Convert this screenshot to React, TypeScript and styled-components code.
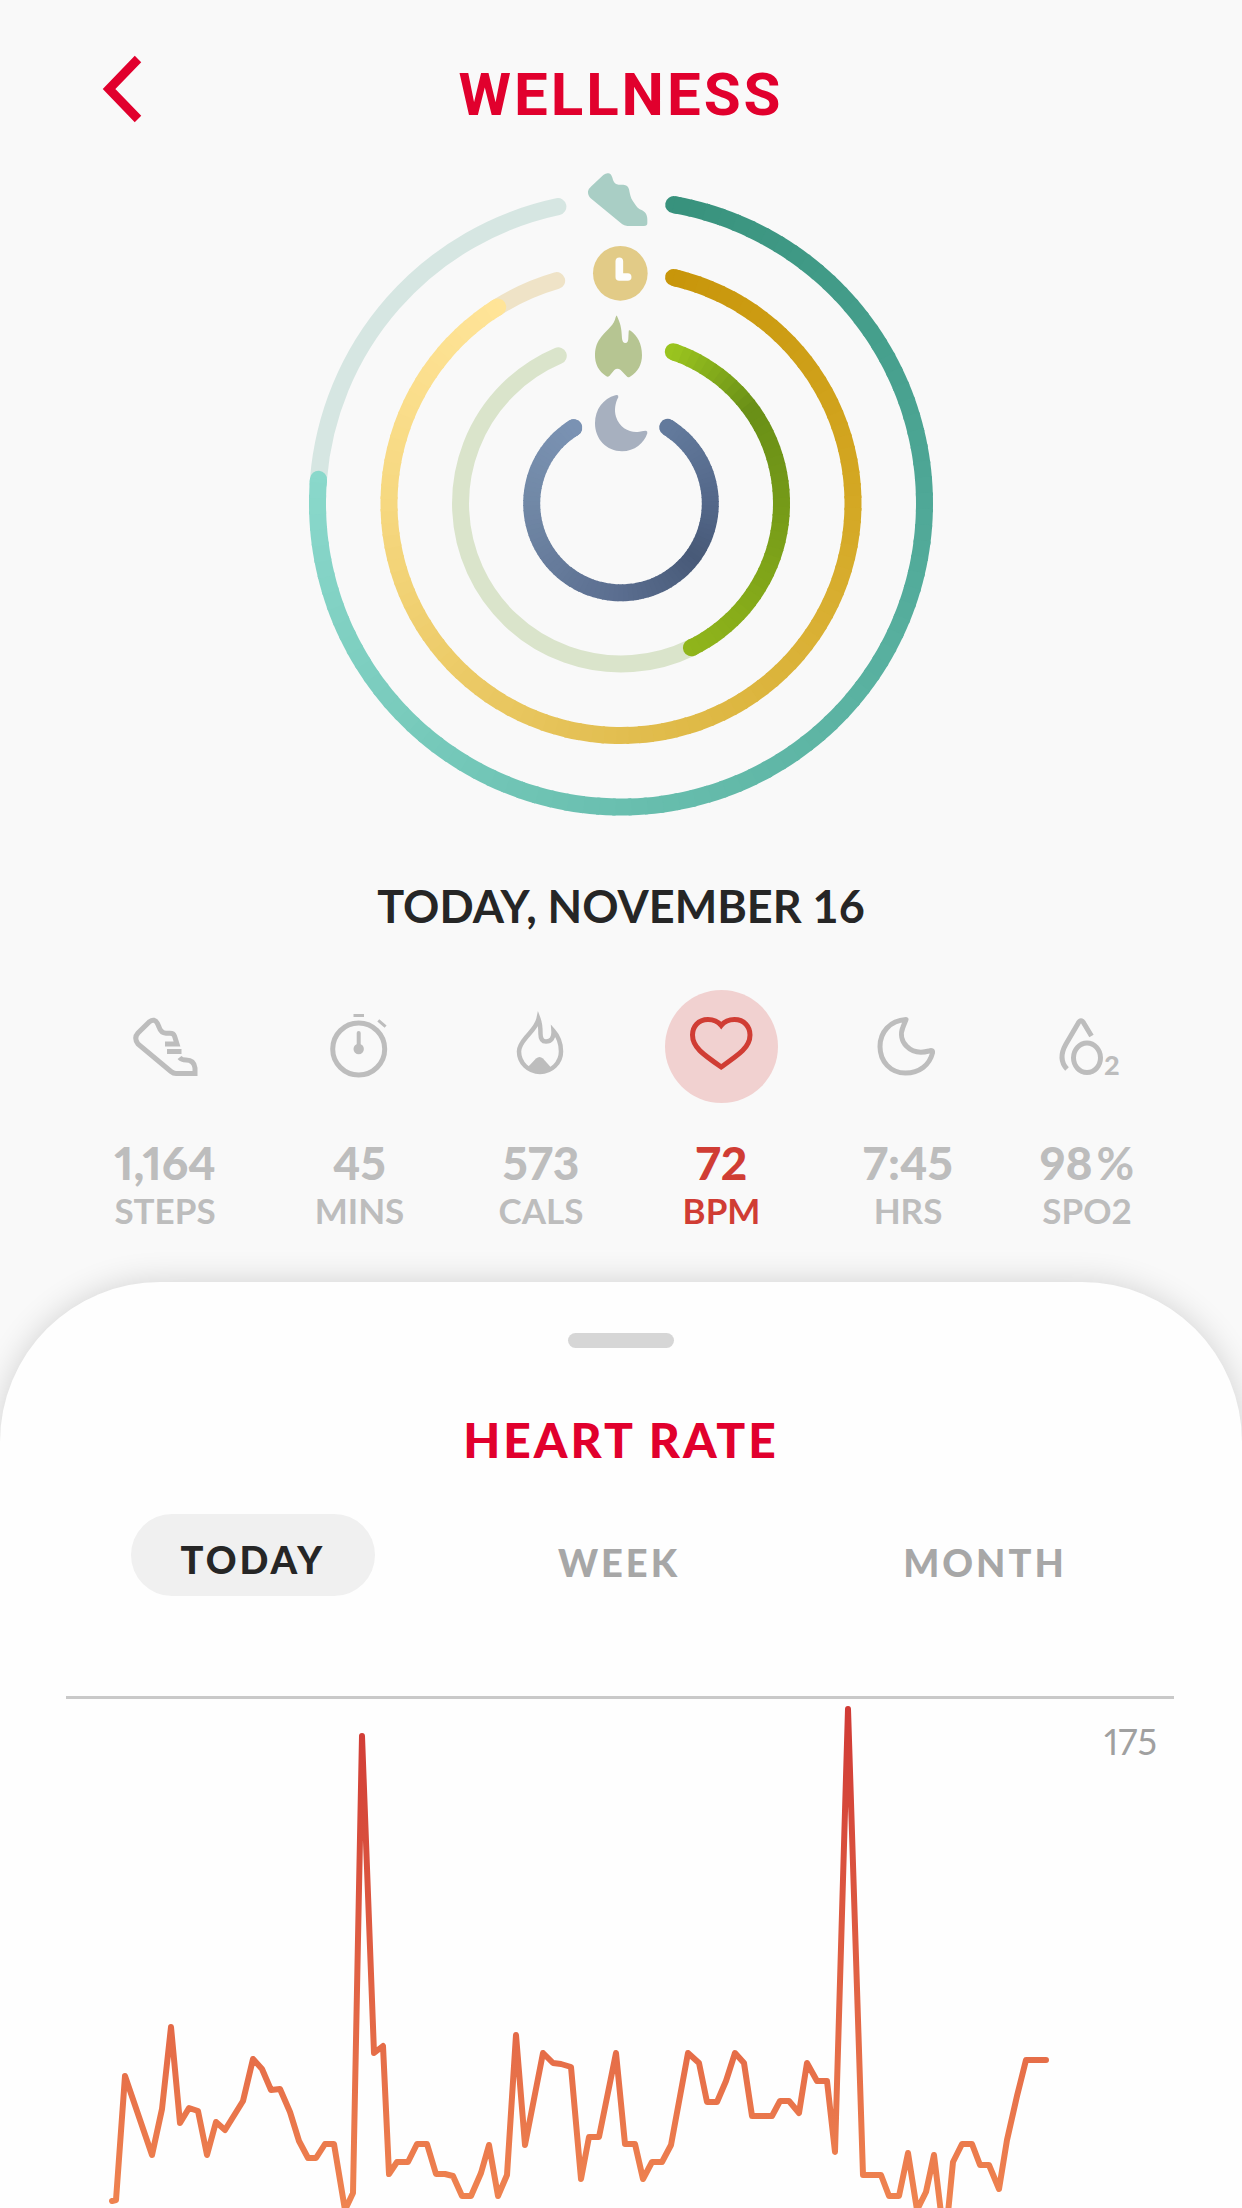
import React, { useState } from "react";
import styled, { createGlobalStyle } from "styled-components";

const RED = "#e1002d";
const ACTIVE = "#d03d34";
const MUTED = "#bdbdbd";

const GlobalStyle = createGlobalStyle`
  *, *::before, *::after { box-sizing: border-box; }
  body {
    margin: 0;
    background: #f9f9f9;
    font-family: Lato, "Open Sans", sans-serif;
    color: #262626;
  }
  h1, h2, p, figure, dl, dd { margin: 0; }
  button {
    font: inherit;
    color: inherit;
    background: none;
    border: 0;
    padding: 0;
    cursor: pointer;
  }
`;

const Page = styled.main`
  display: flex;
  flex-direction: column;
  overflow: hidden;
`;

const Header = styled.header`
  display: grid;
  grid-template-columns: 1fr auto 1fr;
  align-items: start;
  padding: 54px 100px 0;
`;

const BackButton = styled.button`
  justify-self: start;
  height: 70px;
  svg { display: block; }
`;

const Title = styled.h1`
  font: 700 60px/82px Roboto, sans-serif;
  letter-spacing: 3px;
  color: ${RED};
`;

const Rings = styled.svg`
  display: block;
  width: 642px;
  max-width: 100%;
  margin: 34px auto 0;
`;

const DateLine = styled.h2`
  margin-top: 58px;
  font-size: 45px;
  line-height: 56px;
  font-weight: 700;
  text-align: center;
`;

const Metrics = styled.nav`
  display: grid;
  grid-template-columns: 200fr 189fr 174fr 187fr 186fr 172fr;
  margin-top: 56px;
  padding: 0 69px 0 65px;
`;

const Metric = styled.button<{ $active: boolean }>`
  display: flex;
  flex-direction: column;
  align-items: center;
  color: ${(p) => (p.$active ? ACTIVE : MUTED)};
`;

const MetricIcon = styled.span<{ $active: boolean }>`
  display: grid;
  place-items: center;
  width: 113px;
  height: 113px;
  border-radius: 50%;
  background: ${(p) => (p.$active ? "#f1d1d0" : "transparent")};
`;

const MetricValue = styled.span`
  margin-top: 35px;
  font-size: 46px;
  line-height: 50px;
  font-weight: 900;
  font-variant-numeric: proportional-nums;
  white-space: nowrap;
`;

const Unit = styled.span`
  margin-left: 4px;
  font-weight: 700;
`;

const MetricLabel = styled.span`
  font-size: 35px;
  line-height: 44px;
  font-weight: 700;
`;

const Sheet = styled.section`
  display: flex;
  flex-direction: column;
  margin-top: 50px;
  padding-top: 51px;
  border-radius: 160px 160px 0 0;
  background: #fefefe;
  box-shadow: 0 0 32px rgba(0, 0, 0, 0.16);
`;

const Handle = styled.span`
  align-self: center;
  width: 106px;
  height: 15px;
  border-radius: 8px;
  background: #d6d6d6;
`;

const SheetTitle = styled.h2`
  margin-top: 62px;
  font-size: 48px;
  line-height: 60px;
  font-weight: 900;
  letter-spacing: 3px;
  text-align: center;
  color: ${RED};
`;

const Tabs = styled.div`
  display: grid;
  grid-template-columns: repeat(3, 1fr);
  justify-items: center;
  margin-top: 44px;
  padding: 0 74px 0 70px;
`;

const Tab = styled.button<{ $active: boolean }>`
  width: 244px;
  height: 82px;
  padding-top: ${(p) => (p.$active ? 8 : 14)}px;
  border-radius: 41px;
  font-size: 38px;
  line-height: 48px;
  font-weight: 900;
  letter-spacing: 3px;
  color: ${(p) => (p.$active ? "#262626" : "#a7a7a7")};
  background: ${(p) => (p.$active ? "#f0f0f0" : "transparent")};
`;

const Chart = styled.figure`
  display: grid;
  margin: 100px 68px 0 66px;
  border-top: 3px solid #c9c9c9;
  > * { grid-area: 1 / 1; }
`;

const ChartLine = styled.svg`
  display: block;
  width: 100%;
`;

const ChartMax = styled.figcaption`
  justify-self: end;
  align-self: start;
  padding: 20px 17px 0 0;
  font-size: 36px;
  line-height: 44px;
  color: #a0a0a0;
  font-variant-numeric: proportional-nums;
`;

/* ---------- activity rings ---------- */

type Stop = [number, string];

const CX = 621;
const CY = 503.5;
const RING_WIDTH = 17;

const point = (r: number, deg: number) => {
  const a = (deg * Math.PI) / 180;
  return `${(CX + r * Math.sin(a)).toFixed(2)} ${(CY - r * Math.cos(a)).toFixed(2)}`;
};

const arc = (r: number, from: number, to: number) =>
  `M${point(r, from)}A${r} ${r} 0 ${to - from > 180 ? 1 : 0} 1 ${point(r, to)}`;

const channels = (hex: string) =>
  [1, 3, 5].map((i) => parseInt(hex.slice(i, i + 2), 16));

const colorAt = (stops: Stop[], deg: number) => {
  let i = 0;
  while (i < stops.length - 2 && deg > stops[i + 1][0]) i++;
  const [d0, c0] = stops[i];
  const [d1, c1] = stops[i + 1];
  const t = Math.min(1, Math.max(0, (deg - d0) / (d1 - d0)));
  const a = channels(c0);
  const b = channels(c1);
  return `rgb(${a.map((v, k) => Math.round(v + (b[k] - v) * t)).join(",")})`;
};

const STEP = 3;

function Ring({ r, trackEnd, track, stops }: { r: number; trackEnd: number; track: string; stops: Stop[] }) {
  const start = stops[0][0];
  const end = stops[stops.length - 1][0];
  const pieces = [];
  for (let d = start; d < end; d += STEP) {
    const to = Math.min(d + STEP + 0.6, end);
    pieces.push(<path key={d} d={arc(r, d, to)} stroke={colorAt(stops, d + STEP / 2)} />);
  }
  return (
    <g fill="none" strokeWidth={RING_WIDTH}>
      <path d={arc(r, end, trackEnd)} stroke={track} strokeLinecap="round" />
      <path d={arc(r, start, start + 1)} stroke={stops[0][1]} strokeLinecap="round" />
      <path d={arc(r, end - 1, end)} stroke={stops[stops.length - 1][1]} strokeLinecap="round" />
      {pieces}
    </g>
  );
}

function ActivityRings() {
  return (
    <Rings viewBox="300 170 642 650" role="img" aria-label="Daily activity">
      <Ring r={303.5} trackEnd={348} track="#d6e6e2"
        stops={[[10, "#38927d"], [90, "#4fa897"], [180, "#69bfaf"], [274.6, "#8ad8cb"]]} />
      <Ring r={232} trackEnd={343.9} track="#efe3c7"
        stops={[[13.1, "#c8960a"], [90, "#d4a824"], [180, "#e2be50"], [270, "#f6d880"], [327.9, "#ffe498"]]} />
      <Ring r={160.5} trackEnd={337} track="#dae4cb"
        stops={[[19, "#9ac41f"], [54, "#698f17"], [90, "#759a18"], [154, "#90b51b"]]} />
      <Ring r={89.3} trackEnd={328.1} track="#7a92b3"
        stops={[[31.5, "#637a9c"], [90, "#536789"], [125, "#485a78"], [180, "#5a6d8f"], [270, "#7188a6"], [328, "#7a92b3"]]} />
      <g transform="translate(540 160) scale(0.3333)">
        <path fill="#a9cec5" d="M205 40C215 42 216 50 220 62Q224 73 236 74L250 74Q264 75 267 88C270 102 272 115 278 122C286 132 288 140 298 147C312 152 322 160 322 178L322 190Q322 198 312 198L262 198Q252 197 246 192L152 115Q143 106 144 94Q146 86 154 79L190 45Q198 39 205 40Z" />
        <circle cx="241" cy="340" r="82" fill="#e2cb87" />
        <path fill="none" stroke="#fdfdfd" strokeWidth="23" strokeLinecap="round" strokeLinejoin="round" d="M238 304V351H263" />
        <path fill="#b6c592" d="M231 468C240 488 245 500 246 535Q247 549 256 549Q265 549 265 535L266 515Q266 508 273 513C292 528 306 550 306 586C306 612 295 636 270 650Q264 654 260 649L242 630Q232 622 223 630L208 648Q203 653 198 648C176 634 164 612 165 582C166 560 172 545 184 530C205 506 222 495 227 472Q230 464 231 468Z" />
        <path fill="#a7b0bf" d="M226 706Q236 702 235 712C226 728 222 750 228 770C238 804 272 820 298 815Q312 812 318 812Q323 813 322 820C312 850 284 874 246 874C200 874 165 838 165 790C165 748 190 716 226 706Z" />
      </g>
    </Rings>
  );
}

/* ---------- metric icons ---------- */

const iconProps = {
  width: 72,
  height: 72,
  viewBox: "0 0 72 72",
  fill: "none",
  stroke: "currentColor",
  strokeWidth: 5,
  "aria-hidden": true,
} as const;

const ShoeIcon = () => (
  <svg {...iconProps}>
    <path d="M36 33H48L45.500 25Q44.500 22.300 41 22.300H37Q32 22 30 16L28.500 12.500Q25.500 7 20.500 10.700L9 22Q4.500 27 9 33L42 60.500Q44.500 62.500 47 62.500H66V57Q65 49 57 49Q52.500 49 50.500 46.500M38 40.500H52.500" />
  </svg>
);

const StopwatchIcon = () => (
  <svg {...iconProps}>
    <circle cx="34.7" cy="38" r="26" />
    <path strokeWidth="3" d="M29.5 4.5H40M54.3 9.3L61.6 15.7" />
    <path strokeWidth="4" strokeLinecap="round" d="M34.7 22V38" />
    <circle cx="34.7" cy="38" r="5.2" fill="currentColor" stroke="none" />
  </svg>
);

const FlameIcon = () => (
  <svg {...iconProps} strokeWidth={4.5}>
    <path d="M33.5 8C32 15 26 20.500 21 26.500C15.500 33 14 36 14 40.500A21 20.500 0 0 0 56 40.500C56 31 53 25 48.500 20C49 27 46 30.500 41 30.500C36.500 30.500 35.500 27 35.500 23C35.500 16 35 12 33.500 8Z" />
    <path fill="currentColor" stroke="none" d="M22 57L31 47.5Q34.5 44.5 38 47.5L46.5 57Q35 66 22 57Z" />
  </svg>
);

const HeartIcon = () => (
  <svg {...iconProps}>
    <path d="M35.2 14.500C31 9.500 26.500 8.600 22 8.600C12 8.600 6.500 16 6.500 24C6.500 36 16.500 43 35.200 56C53.900 43 64 36 64 24C64 16 58.400 8.600 48.400 8.600C43.900 8.600 39.400 9.500 35.200 14.500Z" />
  </svg>
);

const MoonIcon = () => (
  <svg {...iconProps} strokeLinejoin="round">
    <path d="M34 8.5C18 9.5 8 21 8 35.5C8 50.5 18.5 62 33.5 62C47.5 62 57.5 54 60.5 42Q61 38.5 57 40C38 45.5 25 30 31 16Z" />
  </svg>
);

const OxygenIcon = () => (
  <svg {...iconProps}>
    <path d="M40.5 25L33 12.5Q30 7 27 12.5L15 33Q6.5 48 16 58" />
    <ellipse cx="36" cy="46.8" rx="13.5" ry="14.8" />
    <text x="53" y="64" fill="currentColor" stroke="none" fontFamily="Lato, sans-serif" fontSize="27" fontWeight="900">2</text>
  </svg>
);

const METRICS = [
  { id: "steps", value: "1,164", unit: "", label: "STEPS", Icon: ShoeIcon },
  { id: "mins", value: "45", unit: "", label: "MINS", Icon: StopwatchIcon },
  { id: "cals", value: "573", unit: "", label: "CALS", Icon: FlameIcon },
  { id: "bpm", value: "72", unit: "", label: "BPM", Icon: HeartIcon },
  { id: "hrs", value: "7:45", unit: "", label: "HRS", Icon: MoonIcon },
  { id: "spo2", value: "98", unit: "%", label: "SPO2", Icon: OxygenIcon },
];

/* ---------- heart-rate chart ---------- */

const CHART_LEFT = 66;
const CHART_TOP = 1699;

const SAMPLES: [number, number][] = [
  [112, 2201], [116, 2200], [125, 2076], [152, 2155], [162, 2109], [171, 2027], [180, 2123], [189, 2108],
  [198, 2111], [207, 2155], [216, 2122], [225, 2130], [243, 2101], [253, 2059], [262, 2069], [271, 2090],
  [280, 2089], [290, 2112], [299, 2141], [308, 2158], [316, 2158], [325, 2144], [334, 2144], [345, 2210],
  [353, 2193], [362, 1736], [374, 2053], [383, 2046], [389, 2174], [397, 2162], [408, 2162], [417, 2144],
  [427, 2144], [436, 2174], [445, 2174], [453, 2176], [462, 2196], [471, 2196], [481, 2173], [489, 2145],
  [498, 2196], [507, 2175], [516, 2035], [525, 2145], [543, 2053], [553, 2063], [561, 2064], [571, 2067],
  [581, 2179], [589, 2137], [599, 2137], [616, 2053], [625, 2144], [635, 2144], [643, 2179], [652, 2162],
  [662, 2162], [671, 2145], [688, 2053], [699, 2063], [707, 2102], [717, 2102], [726, 2081], [735, 2053],
  [744, 2063], [752, 2116], [772, 2116], [780, 2101], [789, 2101], [799, 2113], [807, 2063], [817, 2081],
  [827, 2081], [835, 2152], [848, 1709], [863, 2175], [881, 2175], [889, 2196], [899, 2196], [908, 2153],
  [917, 2210], [926, 2192], [934, 2155], [941, 2213], [948, 2213], [953, 2162], [962, 2144], [972, 2144],
  [980, 2165], [989, 2165], [999, 2189], [1007, 2140], [1017, 2096], [1026, 2060], [1046, 2060],
];

function HeartRateLine() {
  const points = SAMPLES.map(([x, y]) => `${x - CHART_LEFT},${y - CHART_TOP}`).join(" ");
  return (
    <ChartLine viewBox="0 0 1108 509" role="img" aria-label="Heart rate today">
      <defs>
        <linearGradient id="rate" gradientUnits="userSpaceOnUse" x1="0" y1="8" x2="0" y2="509">
          <stop offset="0" stopColor="#d03a35" />
          <stop offset="0.65" stopColor="#e46a47" />
          <stop offset="1" stopColor="#ef8450" />
        </linearGradient>
      </defs>
      <polyline points={points} fill="none" stroke="url(#rate)" strokeWidth="6" strokeLinecap="round" strokeLinejoin="round" />
    </ChartLine>
  );
}

const TABS = ["TODAY", "WEEK", "MONTH"];

export default function App() {
  const [metric, setMetric] = useState("bpm");
  const [tab, setTab] = useState("TODAY");
  return (
    <Page>
      <GlobalStyle />
      <Header>
        <BackButton aria-label="Back">
          <svg width="44" height="70" viewBox="0 0 44 70" fill="none" stroke={RED} strokeWidth="9">
            <path d="M38 5L9 35L38 65" />
          </svg>
        </BackButton>
        <Title>WELLNESS</Title>
      </Header>
      <ActivityRings />
      <DateLine>TODAY, NOVEMBER 16</DateLine>
      <Metrics aria-label="Metrics">
        {METRICS.map(({ id, value, unit, label, Icon }) => {
          const active = id === metric;
          return (
            <Metric key={id} $active={active} aria-pressed={active} onClick={() => setMetric(id)}>
              <MetricIcon $active={active}><Icon /></MetricIcon>
              <MetricValue>{value}{unit && <Unit>{unit}</Unit>}</MetricValue>
              <MetricLabel>{label}</MetricLabel>
            </Metric>
          );
        })}
      </Metrics>
      <Sheet>
        <Handle />
        <SheetTitle>HEART RATE</SheetTitle>
        <Tabs role="tablist">
          {TABS.map((name) => (
            <Tab key={name} role="tab" aria-selected={name === tab} $active={name === tab} onClick={() => setTab(name)}>
              {name}
            </Tab>
          ))}
        </Tabs>
        <Chart>
          <HeartRateLine />
          <ChartMax>175</ChartMax>
        </Chart>
      </Sheet>
    </Page>
  );
}
